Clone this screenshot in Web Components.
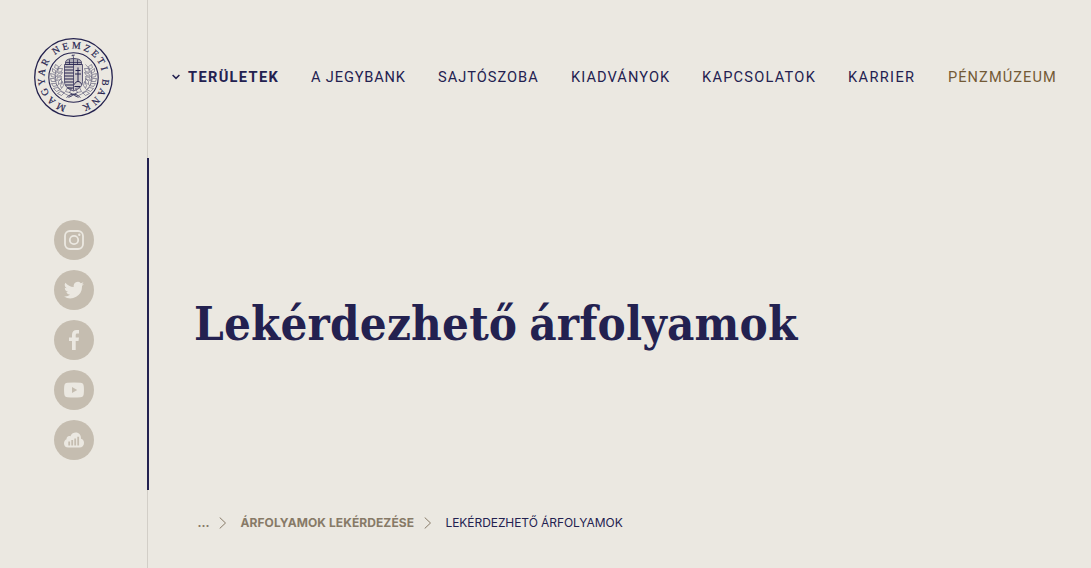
<!DOCTYPE html>
<html lang="hu">
<head>
<meta charset="utf-8">
<title>Lekérdezhető árfolyamok</title>
<style>
html,body{margin:0;height:100%;background:#ebe8e1;overflow:hidden}
</style>
</head>
<body>
<bank-page></bank-page>
<script>
const define=(name,html,setup)=>customElements.define(name,class extends HTMLElement{
  constructor(){super();this.attachShadow({mode:'open'}).innerHTML=html;}
  connectedCallback(){if(setup)setup(this,this.shadowRoot);}
});

const branch='<path d="M-2 19C-10 17-19 10-18-1C-18-6-15-10-12-13M-16-8l-3-2 1-3 3 2zm-2 4l-3-2 0-3 3 2zm0 4l-4-1-1-3 4 1zm0 4l-4 0-1-3 4 0zm2 4l-4 1-2-3 4 0zm3 4l-4 2-3-3 4-1zm4 3l-3 3-4-2 3-2zM-16-5l4-1 1-3-4 0zm-1 4l4-1 2-3-4 1zm0 4l4-1 1-3-4 1zm2 4l3-2 0-4-3 3zm3 4l2-3-1-4-2 4zm4 3l2-4 4 1-2 4z"/>';
define('bank-seal',`<style>:host{display:block;width:81px;height:81px;color:#25234f}svg{display:block}
text{font:400 9.800px "Liberation Serif",serif;fill:currentColor;stroke:currentColor;stroke-width:.2px}</style>
<svg width="81" height="81" viewBox="-40.500 -40.500 81 81" fill="none" stroke="currentColor">
<defs><path id="ring" d="M-7.200 28.100A29 29 0 1 1 7.200 28.100"/></defs>
<circle r="38.800" stroke-width="1.300"/><circle r="24.700" stroke-width="1.100"/>
<text><textPath href="#ring" textLength="166" lengthAdjust="spacing">MAGYAR NEMZETI BANK</textPath></text>
<g stroke-width=".7">
<path d="M-9-13H9V4C9 10 4 12 0 13.500C-4 12-9 10-9 4Z" fill="#25234f" fill-opacity=".15"/><path d="M0-13V13"/>
<path d="M-9-10.500H0M-9-7.500H0M-9-4.500H0M-9-1.500H0M-9 1.500H0M-9 4.500H0M-8 7.500H0M-6 10.500H0" stroke-width="1.200"/>
<path d="M4.500-10V4M2-7H7M1.500-3.500H7.500M1 7C2 3 7 3 8 7M1 9H7" stroke-width="1"/>
<path d="M-8-13V-15C-8-18-4-19 0-19C4-19 8-18 8-15V-13Z" fill="#25234f" fill-opacity=".3"/><path d="M-8-15H8M-4-13V-18M0-13V-19M4-13V-18M.2-19L-.7-23M-2-21.800L1.400-22.500"/>
</g>
<g stroke-width=".6" opacity=".75">${branch}<g transform="scale(-1 1)">${branch}</g></g>
<path d="M-7 20Q0 13 7 20M-4 15L5 20M4 15L-5 20" stroke-width=".8"/>
</svg>`);

const glyphs={
instagram:'<rect x="1" y="1" width="18" height="18" rx="5" fill="none" stroke="currentColor" stroke-width="1.800"/><circle cx="10" cy="10" r="4.200" fill="none" stroke="currentColor" stroke-width="1.800"/><circle cx="15.300" cy="4.700" r="1.200"/>',
twitter:'<path d="M20 3.800a8.200 8.200 0 0 1-2.400.7 4.100 4.100 0 0 0 1.800-2.300 8.200 8.200 0 0 1-2.600 1A4.100 4.100 0 0 0 9.800 7 11.700 11.700 0 0 1 1.400 2.700a4.100 4.100 0 0 0 1.300 5.500A4.100 4.100 0 0 1 .8 7.700a4.100 4.100 0 0 0 3.300 4.100 4.100 4.100 0 0 1-1.800.1 4.100 4.100 0 0 0 3.800 2.800A8.200 8.200 0 0 1 0 16.400 11.700 11.700 0 0 0 18 6z"/>',
facebook:'<path d="M8 20V11H5V7.600H8V5C8 1.800 9.800 0 12.600 0H15V3.500H13.300C12.100 3.500 11.700 4.100 11.700 5.200V7.600H15L14.500 11H11.700V20Z"/>',
youtube:'<path fill-rule="evenodd" d="M3.500 2.800Q10 2.200 16.500 2.800Q19.300 3 19.700 5.800Q20.200 10 19.700 14.200Q19.300 17 16.500 17.200Q10 17.800 3.500 17.200Q.7 17 .3 14.200Q-.2 10 .3 5.800Q.7 3 3.500 2.800M8 7V13.100L13.200 10Z"/>',
cloud:'<path d="M4.500 17.500C1.500 17.500 0 15.600 0 13.400C0 11.300 1.200 9.900 2.500 9.300C2.300 6.700 4.500 5.400 6.400 6.200C7.500 3.500 9.700 2.500 11.700 2.500C15 2.500 17.300 5.100 17 8.700C19 9.200 20 11 20 13C20 15.600 18.200 17.500 15.500 17.500Z"/><path d="M5.200 15.600V11.500M8.200 15.600V10M11.200 15.600V8.400M14.200 15.600V6.800" stroke="#c5bdb0" stroke-width="1.800"/>'
};
define('social-link',`<style>:host{display:flex;width:40px;height:40px;border-radius:50%;background:#c5bdb0;color:#ebe8e1;align-items:center;justify-content:center}svg{fill:currentColor;display:block}</style><svg width="20" height="20" viewBox="0 0 20 20"></svg>`,
(h,r)=>{r.querySelector('svg').innerHTML=glyphs[h.getAttribute('kind')];});

define('nav-item',`<style>:host{display:block;white-space:nowrap;font:400 14.6px/20px Roboto,sans-serif;letter-spacing:var(--track,1.350px);color:#232150}
:host([active]){font-weight:700}:host([museum]){color:#735a36}</style><slot></slot>`);

define('main-nav',`<style>:host{display:grid;grid-template-columns:16px 123px 127px 133px 131px 146px 100px auto;height:20px;padding:67px 0 0 23px}
svg{display:block;margin-top:7px}</style>
<svg width="8" height="6" viewBox="0 0 8 6"><path d="M.6 1L4 4.400L7.400 1" fill="none" stroke="#232150" stroke-width="1.500"/></svg>
<nav-item active>TERÜLETEK</nav-item><nav-item style="--track:.85px">A JEGYBANK</nav-item><nav-item style="--track:1px">SAJTÓSZOBA</nav-item><nav-item style="--track:1.080px">KIADVÁNYOK</nav-item><nav-item style="--track:1.240px">KAPCSOLATOK</nav-item><nav-item>KARRIER</nav-item><nav-item museum style="--track:1.060px">PÉNZMÚZEUM</nav-item>`);

define('side-rail',`<style>:host{display:block;width:147px;height:568px}
bank-seal{margin:37px 0 0 33px}.social{display:grid;gap:10px;margin:102px 0 0 54px}</style>
<bank-seal></bank-seal><div class="social"><social-link kind="instagram"></social-link><social-link kind="twitter"></social-link><social-link kind="facebook"></social-link><social-link kind="youtube"></social-link><social-link kind="cloud"></social-link></div>`);

define('page-divider',`<style>:host{display:grid;grid-template-rows:158px 332px 78px;width:2px}
i{width:1px;background:#d2cec7}b{background:#232150}</style><i></i><b></b><i></i>`);

define('page-title',`<style>:host{display:block;margin:207px 0 0 45px}
h1{margin:0;width:max-content;font:bold 47px/60px "DejaVu Serif Condensed","DejaVu Serif",serif;font-stretch:condensed;letter-spacing:.19px;word-spacing:-3px;color:#232150}</style><h1><slot></slot></h1>`);

define('bread-crumbs',`<style>:host{display:grid;grid-template-columns:21.500px 21.500px 183px 22px auto;height:16px;margin:161px 0 0 48.500px;align-items:center;white-space:nowrap;font:400 12px/16px Inter,sans-serif;color:#232150}
b{color:#877a67;font-weight:700}.link{letter-spacing:.08px}span{letter-spacing:-.07px}svg{display:block}</style>
<b>...</b><svg width="8" height="12" viewBox="0 0 8 12"><path d="M.7.5L6.500 6L.7 11.500" fill="none" stroke="#877a67"/></svg><b class="link">ÁRFOLYAMOK LEKÉRDEZÉSE</b><svg width="8" height="12" viewBox="0 0 8 12"><path d="M.7.5L6.500 6L.7 11.500" fill="none" stroke="#877a67"/></svg><span>LEKÉRDEZHETŐ ÁRFOLYAMOK</span>`);

define('bank-page',`<style>:host{display:grid;grid-template-columns:147px 2px 1fr;width:1091px;height:568px}main{min-width:0}</style>
<side-rail></side-rail><page-divider></page-divider><main><main-nav></main-nav><page-title>Lekérdezhető árfolyamok</page-title><bread-crumbs></bread-crumbs></main>`);
</script>
</body>
</html>
